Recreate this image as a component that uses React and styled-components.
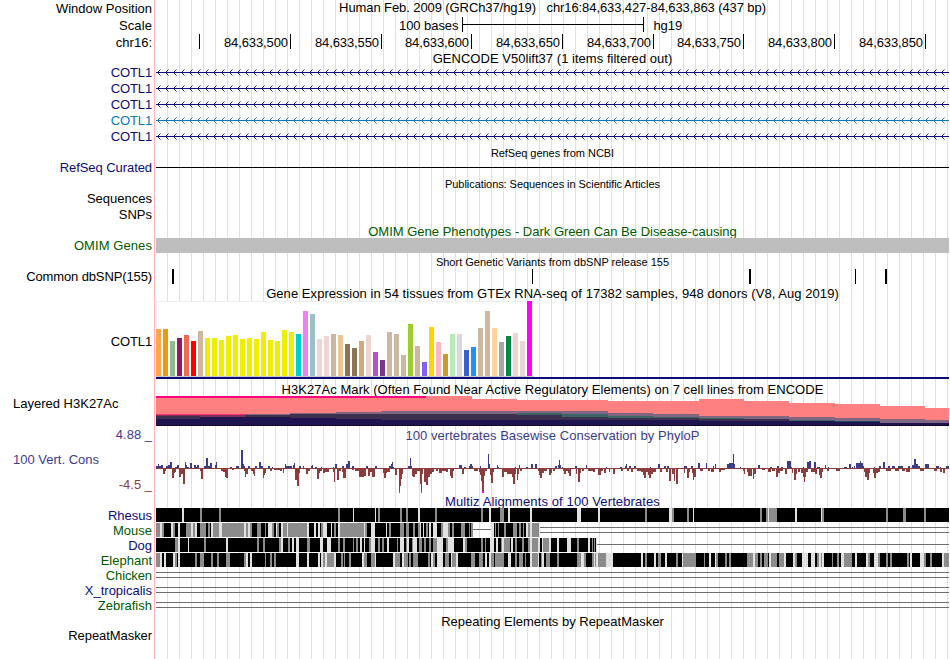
import React from "react";
import styled, { createGlobalStyle } from "styled-components";

const Global = createGlobalStyle`
  body { margin: 0; background: #fff; }
`;

const NAVY = "#0c0c78";
const TRACK_LEFT = 156;
const TRACK_WIDTH = 793;

const Browser = styled.main`
  display: flex;
  flex-direction: column;
  width: 949px;
  height: 659px;
  overflow: hidden;
  font-family: "Liberation Sans", Arial, sans-serif;
  font-size: 13px;
  color: #000;
  background:
    linear-gradient(#ffb4b4, #ffb4b4) 154px 0 / 1px 100% no-repeat,
    repeating-linear-gradient(90deg, transparent 0 11px, #dcdcff 11px 12px) 156px 0 / 793px 100% no-repeat;
`;

const Row = styled.div`
  display: grid;
  grid-template-columns: 152px ${TRACK_WIDTH}px;
  column-gap: 4px;
  height: ${(p) => p.$h}px;
  margin-top: ${(p) => p.$gap || 0}px;
  flex: none;
`;

const Label = styled.div`
  color: ${(p) => p.$color || "#000"};
  line-height: ${(p) => p.$lh}px;
  text-align: right;
  white-space: nowrap;
  letter-spacing: ${(p) => p.$ls || 0}px;
`;

const Title = styled.div`
  grid-column: 2;
  line-height: ${(p) => p.$lh}px;
  font-size: ${(p) => (p.$small ? 11 : 13)}px;
  letter-spacing: ${(p) => p.$ls || 0}px;
  color: ${(p) => p.$color || "#000"};
  text-align: center;
  white-space: pre;
`;

const Plot = styled.svg`
  display: block;
  shape-rendering: crispEdges;
`;

const ScaleBar = styled.div`
  display: flex;
  align-items: center;
  padding-left: 243px;
  height: 18px;
  letter-spacing: -0.06px;
`;

const ScaleRule = styled.div`
  box-sizing: border-box;
  width: 182px;
  height: 15px;
  margin: 0 9px 1px 4px;
  border: solid #000;
  border-width: 0 1px;
  background: linear-gradient(#000, #000) 0 7px / 100% 1px no-repeat;
`;

const Ruler = styled.div`
  display: flex;
  height: 17px;
`;

const Tick = styled.div`
  box-sizing: border-box;
  width: ${(p) => p.$w}px;
  height: 15px;
  margin-top: 1px;
  padding-right: 2px;
  border-right: 1px solid #000;
  line-height: 17px;
  text-align: right;
  letter-spacing: -0.1px;
`;

const LeftLabels = styled.div`
  display: flex;
  flex-direction: column;
  white-space: nowrap;
`;

const SideLabel = styled.div`
  height: ${(p) => p.$h}px;
  line-height: ${(p) => (p.$right ? 18 : 16)}px;
  padding-left: 13px;
  text-align: ${(p) => (p.$right ? "right" : "left")};
  color: ${(p) => p.$color || "#000"};
`;

const OmimBar = styled.div`
  height: 15px;
  background: #bebebe;
`;

const ticks = [199, 290, 381, 471, 562, 653, 743, 834, 925];
const tickText = ["", "500", "550", "600", "650", "700", "750", "800", "850"];

function GeneRow({ color }) {
  const tips = Array.from({ length: 99 }, (_, i) => 1.5 + i * 8);
  return (
    <Row $h={16}>
      <Label $lh={17} $color={color} $ls={-0.15}>COTL1</Label>
      <Plot width={TRACK_WIDTH} height="16">
        <rect x="0" y="8" width={TRACK_WIDTH} height="1" fill={color} />
        <path
          d={tips.map((x) => `M${x + 3} 5.5L${x} 8.5L${x + 3} 11.5`).join("")}
          fill="none"
          stroke={color}
          strokeWidth="0.95"
          shapeRendering="geometricPrecision"
        />
      </Plot>
    </Row>
  );
}

const tan = "#cdb79e";
const yellow = "#eeee00";
const rose = "#eed5d2";
const tissues = [
  [47, "#ffa54f"], [47, "#ee9a00"], [35, "#8fbc8f"], [38, "#8b1c62"], [41, "#ee6a50"], [35, "#ff0000"], [45, tan],
  ...[38, 38, 36, 40, 41, 37, 38, 37, 44, 36, 35, 46, 44].map((h) => [h, yellow]),
  [42, "#00cdcd"], [65, "#ee82ee"], [62, "#9ac0cd"], [37, rose], [40, rose], [42, tan], [41, "#eec591"],
  [32, "#8b7355"], [28, "#8b7355"], [35, "#cdaa7d"], [41, rose], [24, "#b452cd"], [16, "#7a378b"],
  [44, tan], [42, tan], [21, tan], [52, "#9acd32"], [30, tan], [14, "#7a67ee"], [49, "#ffd700"],
  [34, "#ffb6c1"], [22, "#cd9b1d"], [42, "#b4eeb4"], [42, "#d9d9d9"], [26, "#3a5fcd"], [29, "#1e90ff"],
  [48, tan], [65, tan], [48, "#ffd39b"], [34, "#a6a6a6"], [40, "#008b45"], [43, rose], [35, rose], [75, "#ff00ff"],
];

// Each H3K27Ac segment: start x, end x, then stacked [top, colour] bands down to y=426.
const SAL = "#ff8080";
const MIST = "#806680";
const TEAL = "#3c6464";
const DUSK = "#3c3050";
const DEEP = "#1e1450";
const HOT = "#ff0080";
const histone = [
  [156, 200, [396, HOT], [398, SAL], [414, "#ff3068"], [415, "#803060"], [416, DUSK], [419, DEEP]],
  [200, 245, [396, HOT], [398, SAL], [414, "#ff3068"], [415, "#803060"], [417, DEEP]],
  [245, 290, [396, HOT], [398, SAL], [414, MIST], [415, DUSK], [417, DEEP]],
  [290, 336, [396, HOT], [398, SAL], [413, MIST], [414, DUSK], [418, DEEP]],
  [336, 381, [396, HOT], [398, SAL], [412, MIST], [414, DUSK], [419, DEEP]],
  [381, 426, [396, HOT], [398, SAL], [411, MIST], [414, DUSK], [420, DEEP]],
  [426, 472, [396, SAL], [411, MIST], [414, DUSK], [420, DEEP]],
  [472, 517, [399, SAL], [411, MIST], [414, DUSK], [420, DEEP]],
  [517, 562, [400, SAL], [411, MIST], [413, TEAL], [415, DUSK], [420, DEEP]],
  [562, 608, [400, SAL], [411, MIST], [414, TEAL], [417, DUSK], [420, DEEP]],
  [608, 653, [401, SAL], [413, MIST], [416, TEAL], [418, DUSK], [420, DEEP]],
  [653, 699, [401, SAL], [414, MIST], [417, TEAL], [418, DUSK], [420, DEEP]],
  [699, 744, [399, SAL], [416, MIST], [418, TEAL], [419, DUSK], [421, DEEP]],
  [744, 789, [401, SAL], [416, MIST], [419, DUSK], [421, DEEP]],
  [789, 835, [403, SAL], [417, MIST], [420, TEAL], [421, DEEP]],
  [835, 880, [404, SAL], [418, MIST], [421, "#144664"], [422, DEEP]],
  [880, 925, [406, SAL], [419, MIST], [423, DEEP]],
  [925, 949, [408, SAL], [420, MIST], [423, DEEP]],
];

// Conservation scores as [position, width, height]; positions are thirds of a pixel from each origin.
const triples = (text) => text.trim().split(/\s+/).map((t) => t.split(",").map(Number));
const conservation = [
  {
    origin: 150,
    up: `18,6,2 24,3,4 27,6,2 33,6,3 48,6,2 54,6,3 60,6,6 75,6,1 81,6,3 105,3,6 108,3,3 111,6,1 120,6,5 132,6,3
      138,3,1 141,6,3 162,6,2 168,6,10 174,6,2 180,6,5 195,3,3 198,3,6 240,6,1 258,9,2 273,6,18 279,3,4 282,3,2
      294,6,2 315,6,2 327,6,6 333,6,2 354,6,2 366,3,1 405,3,4 408,6,2 414,12,2 429,3,3 432,3,5 447,6,2 459,3,2
      483,3,2 486,3,3 495,6,1 513,3,1 549,3,1 555,6,4 576,6,2 588,6,4 594,6,7 606,6,2 648,6,2 675,6,2 717,6,2
      723,3,4 726,3,6 729,3,1 774,6,2`,
    down: `39,6,5 45,3,2 66,6,9 72,3,4 75,3,3 87,6,8 93,6,5 99,6,15 150,3,2 153,6,10 213,6,2 219,6,3 225,3,8
      228,6,9 246,6,1 282,3,2 285,3,8 288,6,5 303,6,2 309,3,5 312,3,7 339,3,9 342,3,6 345,3,4 360,6,2 372,18,1
      390,6,2 399,3,4 435,6,11 441,6,17 447,3,4 468,6,5 474,6,2 501,6,10 507,3,4 510,6,2 519,6,4 525,12,3
      549,3,3 552,3,13 560,6,11 566,6,2 576,3,3 579,9,9 606,6,1 615,12,2 627,15,8 642,6,7 654,6,7 660,6,3
      666,9,8 699,3,4 702,6,9 708,3,4 711,9,3 735,6,6 747,3,23 750,3,17 753,3,10 756,3,5`,
  },
  {
    origin: 410,
    up: `0,3,10 3,3,2 147,9,3 162,6,1 177,3,2 180,6,4 186,3,2 210,3,2 234,3,14 237,3,4 261,3,3 264,3,1 315,3,1
      327,3,3 348,6,1 362,6,4 374,6,4 435,6,2 444,3,3 447,3,8 450,3,3 456,3,1 495,6,2 528,3,3 588,3,1 630,6,1
      645,3,2 648,3,4 657,6,2 671,6,2 720,3,1 743,6,4 762,6,2 771,6,2`,
    down: `6,3,7 9,6,8 15,6,5 21,9,2 30,3,15 33,3,23 36,3,5 42,6,13 48,6,16 54,6,8 60,6,5 66,6,3 78,6,2 87,9,4
      96,12,2 108,6,3 120,3,7 123,6,9 129,3,2 156,6,5 192,6,2 198,6,2 207,3,3 210,3,6 213,3,12 216,6,23 222,3,7
      225,6,2 240,3,6 243,6,14 249,3,3 276,6,8 282,9,3 291,15,5 306,3,8 309,6,15 315,3,5 321,3,11 324,3,5
      330,6,2 384,3,2 387,3,6 390,6,9 396,6,4 402,9,2 417,6,6 423,3,4 429,6,2 459,3,2 462,6,5 468,6,2 474,3,4
      477,6,7 498,3,5 504,6,13 510,3,4 516,6,2 534,18,2 550,6,3 564,9,6 573,6,2 582,6,4 597,3,3 609,6,5
      633,6,2 651,6,2 663,6,3 681,12,2 693,6,3 699,3,6 702,6,9 708,6,3 714,3,6 717,6,9 723,6,5 729,9,3
      750,6,3 768,6,3 777,6,12 786,6,5 792,3,12 798,6,15`,
  },
  {
    origin: 540,
    up: `432,9,2 453,6,2 474,6,5 498,3,5 519,3,2 525,3,4 561,6,4 567,12,5 579,3,14 582,3,4 600,3,1 654,6,3
      690,6,1 711,6,2 723,6,1 741,12,7 753,3,1 789,3,1 801,6,6 807,6,7 822,6,6 831,9,1 855,3,3 864,3,1 912,9,1
      927,6,4 936,3,1 942,3,2 948,12,5 960,3,7 963,6,5 969,3,2 1002,3,1 1017,6,2 1029,6,6 1044,6,2 1056,9,2
      1074,6,2 1080,9,2 1104,6,2 1116,6,3 1122,6,9 1128,6,4 1134,6,2 1155,12,4 1188,9,2 1200,3,1 1218,9,2`,
    down: `432,3,4 441,6,9 447,3,3 456,3,4 459,3,11 462,6,8 480,9,2 504,6,2 513,9,3 537,6,3 543,12,1 609,3,2
      612,3,5 621,3,3 624,12,7 639,3,10 642,6,5 666,9,1 684,9,3 696,9,2 708,6,8 714,6,4 720,9,2 735,6,5
      756,3,4 762,6,11 768,3,5 774,6,3 783,6,4 789,3,8 792,3,13 795,3,8 798,6,3 813,12,3 825,6,5 837,3,6
      840,6,9 846,3,3 861,6,2 888,12,2 972,3,3 975,6,8 981,6,11 987,3,4 999,3,4 1002,6,9 1008,6,4 1014,6,3
      1038,15,2 1065,12,2 1086,9,2 1098,12,3 1140,12,2 1182,9,2 1200,6,3 1209,6,4`,
  },
];

function bars(list, origin, up) {
  return list
    .map(([c, w, h]) => {
      const x = Math.round(origin - TRACK_LEFT + c / 3);
      const width = Math.max(1, Math.round(w / 3));
      return up ? `M${x} ${40 - h}h${width}v${h}h${-width}z` : `M${x} 41h${width}v${h}h${-width}z`;
    })
    .join("");
}

// Alignment shading: tone letter + start, in thirds of a pixel from each origin.
// b = black, g = grey, l = light, n = nothing drawn.
const align = {
  Rhesus: [
    [150, "b18 l96 b102 g150 b156 g207 b213 g564 b570"],
    [345, "b0 l24 b27 l90 b93 g99 b105 g165 b171 g183 b189 l219 b225 g270 b276 g408 b414 l432 b438 g465 b477 l489 b495 l555 b561"],
    [550, "b0 l81 b93 l144 b150 g285 b291 l357 g366 b372 g411 b417 l429 b432 g630 b636 g648 l654 g657 b681 l735 b741 l813 g816 b822 g1008 b1014 g1059 b1068 g1122 b1128 n1197"],
  ],
  Mouse: [
    [150, "g18 l30 g36 b42 l63 g69 b75 l84 b90 g108 l123 g129 l135 b141 g150 b168 g174 b180 l183 g189 l207 g216 l282 g288 l294 g300 b306 g321 b333 g345 b348 l354 g366 b372 l378 g381 b387 l393 g399 l411 g414 l471 b477 l492 b498 l504 b510 g513 l519 b531 l543 b546 g552 b558 l564 g570"],
    [345, "g0 l57 g60 b66 l78 b90 l123 b126 g132 b138 g165 b177 g183 b192 g204 b210 g219 l225 b228 l234 b237 g243 b249 l252 b258 l264 b276 g288 l294 g309 b315 g321 b327 g348 b360 g372 b375 g378 n384 l438 b447 g450 b453 g459 b462 g477 b483 g504 b516 g522 b528 g534 b537 l543 g549 l555 g561 l582 n585"],
  ],
  Dog: [
    [150, "b18 g75 l84 b90 l114 b117 g162 b168 l228 b234 g321 b327 g339 b345 g387 l393 b399 g414 b420 l426 b432 l438 b447 g471 b480 l510 b519 l531 b543 g564 b570 g579"],
    [345, "b0 g24 b27 g33 b39 l45 b51 l57 b60 g72 l78 b90 g99 b105 g111 b117 l126 b132 g156 b159 l165 b177 g183 l186 b192 g201 l204 b216 g222 b231 g237 b243 g252 b258 g264 l276 b294 g303 l309 b327 l354 g360 b366 g408 b414 g420 b423 l435 b447 l453 b459 g468 l471 g477 b495 l498 b504 g510 b516 g531 b537 g549 l555 g561 l579 b585 l591 g594 l612"],
    [550, "b3 l21 b27 l51 b63 g81 b87 l114 b120 g126 b129 g132 b135 l138 n141"],
  ],
  Elephant: [
    [150, "g18 l30 b36 l42 b48 l69 g75 b81 l84 b90 g135 b141 g150 b162 g183 b189 g201 b207 g228 b240 g282 l288 b294 l300 b306 g345 b348 g360 b366 g372 b378 l438 b447 l471 b477 l504 b510 l513 g519 l525 g531 l552 b558 g573 b579 g582"],
    [345, "b0 g12 b18 l51 g57 g60 b66 g78 l90 b93 l144 g150 b165 l171 g177 b189 g192 b198 g204 b219 g249 b255 l258 g264 b270 l276 b294 g300 b312 l318 g321 l333 b339 g378 b390 g402 b414 l420 b426 l432 g438 b447 g450 b477 l489 b498 g510 b516 g522 b534 g540 b543 l555 g561 l579 b582 g588 l591 b597 g603 b615"],
    [550, "b0 g21 b27 g81 l93 g102 b108 g126 l132 g135 l138 g144 l168 b189 l273 b279 g285 b291 l312 b318 g324 b333 l345 b351 g378 b384 l396 g399 b438 g462 b465 l477 b483 l495 g498 b504 g525 b531 g537 b543 g591 l609 g615 b624 g630 b636 g642 b654 l657 g663 b681 g687 l702 b708 l729 g735 b741 l756 b774 l783 b795 g801 l807 g813 l816 b822 g846 b849 g861 b867 l873 g882 b906 l915 b921 l948 g954 b960 l972 g984 b990 g1008 b1014 g1020 b1026 g1071 b1077 l1080 b1086 l1110 g1122 b1128 g1140 b1146 l1176 g1182 n1197"],
  ],
};
const tones = { b: "#000", g: "#8c8c8c", l: "#e1e1e1" };

function alignmentRects(parts) {
  const flat = parts.flatMap(([origin, text]) =>
    text.split(" ").map((t) => [t[0], Math.round(origin - TRACK_LEFT + Number(t.slice(1)) / 3)])
  );
  return flat.slice(0, -1).map(([tone, x], i) =>
    tone === "n" ? null : <rect key={i} x={x} y="0" width={flat[i + 1][1] - x} height="14" fill={tones[tone]} />
  );
}

// Unaligned spans: [start x, end x, line offsets].
const species = [
  { name: "Rhesus", color: NAVY, lines: [] },
  { name: "Mouse", color: "#005a00", lines: [[317, 335, [6]], [384, 793, [4, 9]]] },
  { name: "Dog", color: NAVY, lines: [[441, 793, [6]]] },
  { name: "Elephant", color: "#005a00", lines: [] },
  { name: "Chicken", color: "#005a00", ls: -0.1, lines: [[0, 793, [4, 9]]] },
  { name: "X_tropicalis", color: NAVY, lines: [[0, 793, [4, 9]]] },
  { name: "Zebrafish", color: "#005a00", lines: [[0, 793, [4, 9]]] },
];

const variants = [[16, 2], [376, 1], [593, 2], [699, 1], [729, 2]];

export default function App() {
  return (
    <>
      <Global />
      <Browser>
        <Row $h={16}>
          <Label $lh={17}>Window Position</Label>
          <Title $lh={16} $ls={-0.09}>{"Human Feb. 2009 (GRCh37/hg19)   chr16:84,633,427-84,633,863 (437 bp)"}</Title>
        </Row>
        <Row $h={17}>
          <Label $lh={19} $ls={0.1}>Scale</Label>
          <ScaleBar>100 bases<ScaleRule />hg19</ScaleBar>
        </Row>
        <Row $h={17}>
          <Label $lh={19}>chr16:</Label>
          <Ruler>
            {ticks.map((x, i) => (
              <Tick key={x} $w={x - (i ? ticks[i - 1] : TRACK_LEFT - 1)}>
                {tickText[i] && `84,633,${tickText[i]}`}
              </Tick>
            ))}
          </Ruler>
        </Row>
        <Row $h={14}>
          <Title $lh={18} $ls={0.03}>GENCODE V50lift37 (1 items filtered out)</Title>
        </Row>
        {[NAVY, NAVY, NAVY, "#0c78b4", NAVY].map((c, i) => <GeneRow key={i} color={c} />)}
        <Row $h={14} $gap={2}>
          <Title $lh={15} $small $ls={-0.04}>RefSeq genes from NCBI</Title>
        </Row>
        <Row $h={15}>
          <Label $lh={16} $color={NAVY} $ls={-0.07}>RefSeq Curated</Label>
          <Plot width={TRACK_WIDTH} height="15"><rect y="7" width={TRACK_WIDTH} height="1" fill="#000" /></Plot>
        </Row>
        <Row $h={14} $gap={2}>
          <Title $lh={15} $small $ls={-0.06}>Publications: Sequences in Scientific Articles</Title>
        </Row>
        <Row $h={16}><Label $lh={16}>Sequences</Label></Row>
        <Row $h={16}><Label $lh={16}>SNPs</Label></Row>
        <Row $h={14} $gap={1}>
          <Title $lh={16} $color="#005a00">OMIM Gene Phenotypes - Dark Green Can Be Disease-causing</Title>
        </Row>
        <Row $h={15}>
          <Label $lh={16} $color="#005a00" $ls={0.08}>OMIM Genes</Label>
          <OmimBar />
        </Row>
        <Row $h={14} $gap={2}>
          <Title $lh={15} $small>Short Genetic Variants from dbSNP release 155</Title>
        </Row>
        <Row $h={15}>
          <Label $lh={16} $ls={-0.12}>Common dbSNP(155)</Label>
          <Plot width={TRACK_WIDTH} height="15">
            {variants.map(([x, w]) => <rect key={x} x={x} y="0" width={w} height="15" />)}
          </Plot>
        </Row>
        <Row $h={15} $gap={2}>
          <Title $lh={16} $ls={0.06}>Gene Expression in 54 tissues from GTEx RNA-seq of 17382 samples, 948 donors (V8, Aug 2019)</Title>
        </Row>
        <Row $h={78}>
          <Label $lh={82} $ls={-0.15}>COTL1</Label>
          <Plot width={TRACK_WIDTH} height="78">
            <rect width="378" height="75" fill="#eee" />
            <rect x="1" y="1" width="377" height="74" fill="#fff" />
            <rect y="75" width="378" height="1" fill="#ccc" />
            {tissues.map(([h, c], i) => <rect key={i} x={i * 7} y={75 - h} width="5" height={h} fill={c} />)}
            <rect y="76" width={TRACK_WIDTH} height="2" fill={NAVY} />
          </Plot>
        </Row>
        <Row $h={14} $gap={3}>
          <Title $lh={15} $ls={0.05}>H3K27Ac Mark (Often Found Near Active Regulatory Elements) on 7 cell lines from ENCODE</Title>
        </Row>
        <Row $h={30}>
          <LeftLabels><SideLabel $h={30}>Layered H3K27Ac</SideLabel></LeftLabels>
          <Plot width={TRACK_WIDTH} height="30">
            {histone.map(([x0, x1, ...bands]) =>
              bands.map(([top, c], i) => (
                <rect key={`${x0}-${i}`} x={x0 - TRACK_LEFT} y={top - 396} width={x1 - x0} height={426 - top} fill={c} />
              ))
            )}
            <rect y="29" width={TRACK_WIDTH} height="1" fill="#140428" />
          </Plot>
        </Row>
        <Row $h={68}>
          <LeftLabels>
            <SideLabel $h={26} $right $color="#3c3c8c">4.88 _</SideLabel>
            <SideLabel $h={24} $color="#3c3c8c">100 Vert. Cons</SideLabel>
            <SideLabel $h={18} $right $color="#8c3c3c">-4.5 _</SideLabel>
          </LeftLabels>
          <div>
            <Title $lh={20} $ls={0.04} $color="#3c3c8c">100 vertebrates Basewise Conservation by PhyloP</Title>
            <Plot width={TRACK_WIDTH} height="48" viewBox="0 18 793 48">
              <rect y="40" width={TRACK_WIDTH} height="1" fill="#8c3c3c" />
              {conservation.map((part) => (
                <g key={part.origin}>
                  <path d={bars(triples(part.up), part.origin, true)} fill="#3c3c8c" />
                  <path d={bars(triples(part.down), part.origin, false)} fill="#8c3c3c" />
                </g>
              ))}
              <path d="M243 63h1v2h-1zM265 63h1v2h-1zM326 63h2v2h-2z" fill="#ff00ff" />
            </Plot>
          </div>
        </Row>
        <Row $h={14}>
          <Title $lh={15} $ls={0.11} $color={NAVY}>Multiz Alignments of 100 Vertebrates</Title>
        </Row>
        {species.map(({ name, color, ls, lines }) => (
          <Row key={name} $h={15}>
            <Label $lh={16} $color={color} $ls={ls}>{name}</Label>
            <Plot width={TRACK_WIDTH} height="15">
              {align[name] && alignmentRects(align[name])}
              {lines.map(([x0, x1, ys]) =>
                ys.map((y) => <rect key={`${x0}-${y}`} x={x0} y={y} width={x1 - x0} height="1" fill="#6e6e6e" />)
              )}
            </Plot>
          </Row>
        ))}
        <Row $h={15} $gap={1}>
          <Title $lh={16}>Repeating Elements by RepeatMasker</Title>
        </Row>
        <Row $h={16}><Label $lh={14} $ls={-0.07}>RepeatMasker</Label></Row>
      </Browser>
    </>
  );
}
